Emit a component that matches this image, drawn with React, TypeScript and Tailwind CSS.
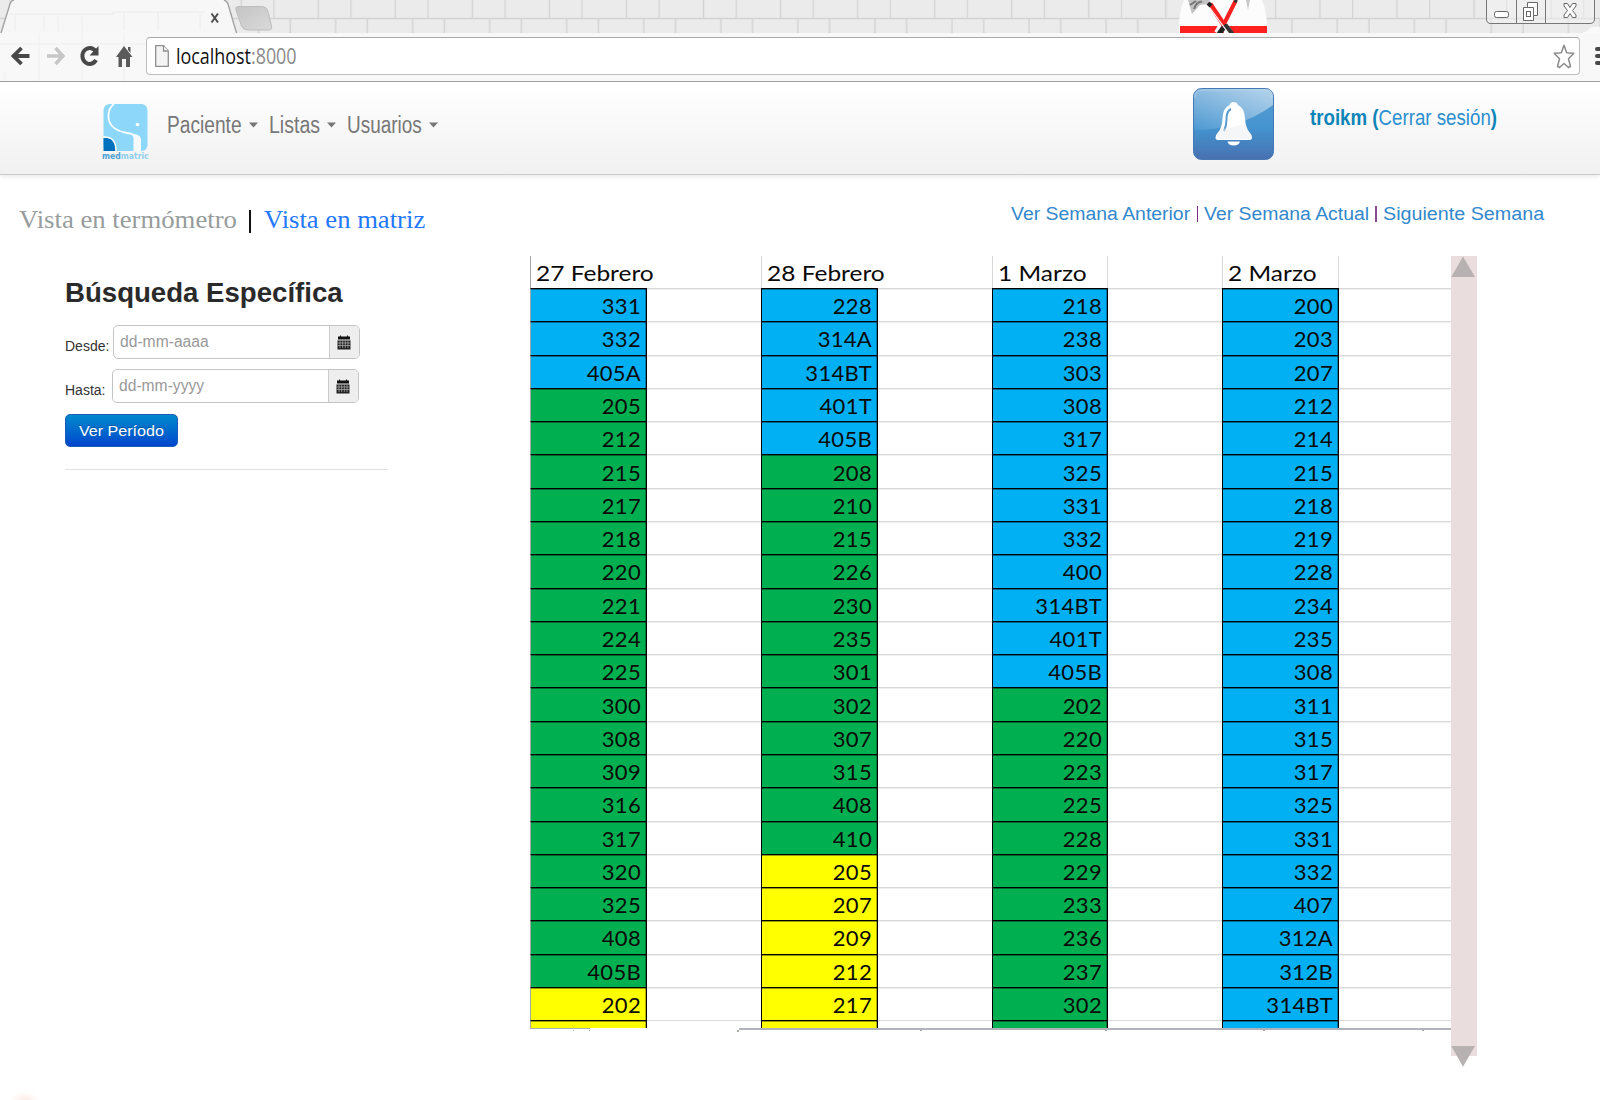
import { useLayoutEffect, useRef, useState } from "react";
import type { ReactNode } from "react";

/* Condenses or widens its text so that it fills the width given by the class. */
function Fit({ className, children }: { className: string; children: ReactNode }) {
  const box = useRef<HTMLSpanElement>(null);
  const text = useRef<HTMLSpanElement>(null);
  const [scale, setScale] = useState(1);
  useLayoutEffect(() => {
    if (box.current && text.current && text.current.offsetWidth > 0) {
      setScale(box.current.getBoundingClientRect().width / text.current.offsetWidth);
    }
  }, []);
  return (
    <span ref={box} className={`block shrink-0 whitespace-nowrap ${className}`}>
      <span ref={text} className="inline-block origin-left" style={{ transform: `scaleX(${scale})` }}>
        {children}
      </span>
    </span>
  );
}

type Run = ["b" | "g" | "y", string];
const days: { label: string; width: string; runs: Run[] }[] = [
  {
    label: "27 Febrero",
    width: "w-[118px]",
    runs: [
      ["b", "331 332 405A"],
      ["g", "205 212 215 217 218 220 221 224 225 300 308 309 316 317 320 325 408 405B"],
      ["y", "202"],
    ],
  },
  {
    label: "28 Febrero",
    width: "w-[118px]",
    runs: [
      ["b", "228 314A 314BT 401T 405B"],
      ["g", "208 210 215 226 230 235 301 302 307 315 408 410"],
      ["y", "205 207 209 212 217"],
    ],
  },
  {
    label: "1 Marzo",
    width: "w-[89px]",
    runs: [
      ["b", "218 238 303 308 317 325 331 332 400 314BT 401T 405B"],
      ["g", "202 220 223 225 228 229 233 236 237 302"],
    ],
  },
  {
    label: "2 Marzo",
    width: "w-[89px]",
    runs: [
      ["b", "200 203 207 212 214 215 218 219 228 234 235 308 311 315 317 325 331 332 407 312A 312B 314BT"],
    ],
  },
];
const fills = { b: "bg-[#00b0f2]", g: "bg-[#00b050]", y: "bg-[#ffff00]" };

function DayColumn({ day, first }: { day: (typeof days)[number]; first: boolean }) {
  const cells = day.runs.flatMap(([c, list]) => list.split(" ").map((v) => ({ c, v })));
  const last = cells[cells.length - 1].c;
  const left = first ? "border-l border-l-[#a6a6a6]" : "border-l border-l-black";
  const right = "border-r border-r-black shadow-[inset_0_1px_0_rgba(0,0,0,0.4),inset_-1px_0_0_rgba(0,0,0,0.3)]";
  return (
    <>
      <div className="flex flex-col">
        <div
          className={`flex h-[32px] items-center border-l pl-[5px] ${first ? "border-[#a6a6a6]" : "border-[#d9d9d9]"} ${
            day.label.includes("Marzo") ? "border-r border-r-[#d9d9d9]" : ""
          }`}
        >
          <Fit className={`${day.width} pt-px text-[22px] leading-[28px]`}>{day.label}</Fit>
        </div>
        {cells.map((cell, i) => (
          <div
            key={i}
            className={`flex h-[33.29px] items-center justify-end border-t border-t-black pr-[5px] pt-[2px] text-[22px] leading-[28px] tracking-[0.3px] ${left} ${right} ${fills[cell.c]}`}
          >
            {cell.v}
          </div>
        ))}
        <div className={`h-[8px] border-t border-t-black ${left} ${right} ${fills[last]}`} />
      </div>
      <div className="flex flex-col">
        <div className="h-[32px]" />
        {cells.map((_, i) => (
          <div key={i} className="h-[33.29px] border-t border-t-[#d9d9d9] shadow-[inset_0_1px_0_#f0f0f0]" />
        ))}
        <div className="h-[8px] border-t border-t-[#d9d9d9]" />
      </div>
    </>
  );
}

function TabStrip() {
  return (
    <svg className="block" width="1600" height="33" viewBox="0 0 1600 33">
      <defs>
        <pattern id="brick" patternUnits="userSpaceOnUse" x="273.3" y="0" width="77.05" height="33">
          <path d="M0 18.5H77.05M.5 0V18M45 0V18M17 19V33M62.3 19V33" stroke="#d3d3d3" strokeWidth="1.4" fill="none" />
        </pattern>
        <linearGradient id="newtab" x1="0" x2="1" y1="0" y2="1">
          <stop offset="0" stopColor="#c4c4c4" />
          <stop offset="1" stopColor="#dadada" />
        </linearGradient>
      </defs>
      <rect width="1600" height="33" fill="#ebebeb" />
      <rect width="1600" height="33" fill="url(#brick)" />
      <path d="M1 33 10 4Q12 0 15 0H223Q227 0 228 4L236.500 33Z" fill="#f7f7f7" />
      <path
        d="M10 14H113V12H205M15 14V31M58 16V31M44 16V31M82 16V31M124 13V30M158 12V30M200 14V30"
        stroke="#ececec"
        strokeWidth="1"
        fill="none"
      />
      <path d="M1 33 10 4Q11.500 0 14 0M224 0Q227 1 228 4L236.500 33" fill="none" stroke="#a3a3a3" strokeWidth="1.4" />
      <path d="m211.500 13.500 6.500 9m0-9-6.500 9" stroke="#4d4d4d" strokeWidth="2" />
      <path
        d="M238 6.500H262Q266 6.500 267.500 10L271.500 26Q272.500 30 268 30H248Q243 30 241.500 26L236 10Q235 6.500 238 6.500Z"
        fill="url(#newtab)"
        stroke="#bdbdbd"
      />
      <path d="M1179 33Q1178 14 1184 0H1262Q1268 14 1267 33Z" fill="#fcfcfc" />
      <rect x="1180" y="26" width="87" height="7" fill="#ff2020" />
      <path d="M1209 4 1229 33" stroke="#fff" strokeWidth="8" />
      <path d="M1236 0 1217 33" stroke="#fff" strokeWidth="6" />
      <path d="M1235.500 1 1223 26" stroke="#f5221f" strokeWidth="4" />
      <path d="M1234.500 0 1237 2" stroke="#333" strokeWidth="3" />
      <path d="M1226 24 1219 34" stroke="#222" strokeWidth="5" />
      <path d="M1210 4 1224 25" stroke="#f5221f" strokeWidth="5" />
      <path d="M1225 25 1232 34" stroke="#333" strokeWidth="5" />
      <path d="M1208.500 6 1229 34" stroke="#fff" strokeWidth="1.200" />
      <path d="M1188 0 1192 14 1200 5 1207 4 1210 0Z" fill="#c2c2c2" />
      <path d="M1190 5 1196 1M1194 9Q1196 2 1202 1.500" stroke="#777" strokeWidth="2" fill="none" />
      <path d="M1208 3 1211 6" stroke="#222" strokeWidth="4" />
      <path d="M1246 0 1248 10 1250 0Z" fill="#c9c9c9" />
      <path d="M1486.500 0V19Q1486.500 23.500 1491 23.500H1590Q1594.500 23.500 1594.500 19V0" fill="#f4f4f4" fillOpacity=".5" stroke="#777" />
      <path d="M1516.500 0V23M1545.500 0V23" stroke="#777" />
      <rect x="1494.500" y="11.500" width="14" height="6" rx="2" fill="#fff" stroke="#666" />
      <path d="M1527.500 2.500H1537.500V15.500H1533.500V20.500H1523.500V7.500H1527.500Z" fill="#fff" stroke="#666" strokeLinejoin="round" />
      <path d="M1527.500 7.500H1533.500V15.500" fill="none" stroke="#666" />
      <rect x="1526.500" y="11.500" width="4" height="5" fill="#fff" stroke="#666" />
      <path
        d="M1564 3.500H1567.500L1570 7.500 1572.500 3.500H1576V6L1572.500 10.500 1576 15V17.500H1572.500L1570 13.500 1567.500 17.500H1564V15L1567.500 10.500 1564 6Z"
        fill="#fff"
        stroke="#666"
      />
      <path d="M1582 33Q1588 31 1590 28Q1594 26 1600 27V33Z" fill="#fafafa" />
    </svg>
  );
}

function NavIcons() {
  return (
    <svg className="block shrink-0" width="146" height="48" viewBox="0 0 146 48" fill="none">
      <path d="M0 11H146M39 0V48M82 0V48M124 0V48M5 40V48" stroke="#efefef" />
      <path d="M29.500 23H14M21.500 15 13.500 23 21.500 31" stroke="#484848" strokeWidth="3.800" />
      <path d="M47 23H62.500M55.500 15 63 23 55.500 31" stroke="#c6c6c6" strokeWidth="3.400" />
      <path d="M95.500 18A7.300 8 0 1 0 96 27" stroke="#484848" strokeWidth="4" />
      <path d="M98.500 13V22.500H89.500Z" fill="#484848" />
      <path d="M124 13 132.500 24H130V34H126V26H122V34H118.500V24H116Z" fill="#5a5a5a" />
      <path d="M128 14H130.500V20L128 17Z" fill="#5a5a5a" />
    </svg>
  );
}

function Logo() {
  return (
    <svg className="block" width="46" height="57" viewBox="0 0 46 57">
      <rect x=".5" y="0" width="44" height="47" rx="6" fill="#8dd8fa" />
      <path d="M.5 34H6Q13 35 13 47H.5Z" fill="#0071bc" />
      <path d="M0 33Q13 32 13 47" fill="none" stroke="#fff" strokeWidth="1.500" />
      <path d="M11 0Q5 4 5.500 14Q7 26 24 29Q32 30 33 34" fill="none" stroke="#fff" strokeWidth="1.800" />
      <path d="M29 30Q37 30 38 35V47H30.500V34Q30 32 29 30Z" fill="#f7fafc" />
      <circle cx="34.500" cy="20.500" r="1.800" fill="#fff" />
    </svg>
  );
}

function Caret({ className }: { className: string }) {
  return (
    <svg className={`shrink-0 ${className}`} width="9" height="6" viewBox="0 0 9 6">
      <path d="M0 .5H9L4.500 5.500Z" fill="#777" />
    </svg>
  );
}

function BellButton() {
  return (
    <svg className="block" width="81" height="72" viewBox="0 0 81 72">
      <defs>
        <linearGradient id="blue" x1="0" x2="0" y1="0" y2="1">
          <stop offset="0" stopColor="#5c9fd3" />
          <stop offset=".55" stopColor="#4494d0" />
          <stop offset="1" stopColor="#4870b0" />
        </linearGradient>
        <linearGradient id="gloss" x1="0" x2="1" y1="1" y2="0">
          <stop offset="0" stopColor="#fff" stopOpacity=".05" />
          <stop offset="1" stopColor="#fff" stopOpacity=".55" />
        </linearGradient>
      </defs>
      <rect x=".5" y=".5" width="80" height="71" rx="8" fill="url(#blue)" stroke="#4579b4" />
      <path d="M1 42Q46 42 80 17V9Q80 1 72 1H9Q1 1 1 9Z" fill="url(#gloss)" />
      <path d="M2 10Q2 2 10 2H71Q79 2 79 10" fill="none" stroke="#b9d8ee" strokeOpacity=".7" />
      <path
        d="M40.500 14Q44 14 45 17Q51.500 20 52 30Q52.500 40 56.500 44.500Q59 47 59 49.500Q59 52 56 52H25Q22.500 52 22.500 49.500Q22.500 47 25 44.500Q29 40 29.500 30Q30 20 36.500 17Q37.500 14 40.500 14Z"
        fill="#fff"
      />
      <path d="M34.500 53.500H47Q46 57.500 40.500 57.500Q35.500 57.500 34.500 53.500Z" fill="#fff" />
      <path d="M38 21Q33.500 23 33.500 31Q33.500 38 31 43" fill="none" stroke="#5a9dd2" strokeWidth="2" />
      <path d="M29 41Q41 40 52.500 35Q54 42 58 46L59 51H23Q23 47 26 45Q28 42 29 41Z" fill="#eceef0" fillOpacity=".5" />
    </svg>
  );
}

function CalendarIcon() {
  return (
    <svg className="-ml-[2px]" width="14" height="15" viewBox="0 0 14 15">
      <path d="M1 1.500H3V.500H4V1.500H10V.500H11V1.500H13V4.500H1Z" fill="#111" />
      <path d="M.5 5.500H13.500V14.500H.5Z" fill="#222" />
      <path d="M.5 8H13.500M.5 10.500H13.500M3 5.500V13M5.700 5.500V13M8.300 5.500V13M11 5.500V13" stroke="#b4b4b4" strokeWidth=".7" />
    </svg>
  );
}

function DateField({ label, labelWidth, gap, hint, hintWidth }: { label: string; labelWidth: string; gap: string; hint: string; hintWidth: string }) {
  return (
    <div className="flex h-[34px] items-start">
      <Fit className={`${labelWidth} pt-[12px] text-[14px] leading-[18px] text-[#333]`}>{label}</Fit>
      <div className={`flex h-[34px] w-[247px] overflow-hidden rounded-[5px] border border-[#c4c4c4] bg-white ${gap}`}>
        <div className="flex flex-1 items-center pl-[6px]">
          <Fit className={`${hintWidth} text-[16px] leading-[20px] text-[#999]`}>{hint}</Fit>
        </div>
        <div className="flex w-[30px] items-center justify-center border-l border-[#ccc] bg-[#eee]">
          <CalendarIcon />
        </div>
      </div>
    </div>
  );
}

export default function App() {
  return (
    <div className="flex h-[1100px] w-[1600px] flex-col overflow-hidden bg-white font-['Liberation_Sans',sans-serif]">
      <TabStrip />
      <div className="flex h-[49px] shrink-0 overflow-hidden border-b border-b-[#a0a0a0] bg-[#f8f8f8]">
        <NavIcons />
        <div className="mt-[4px] flex h-[38px] w-[1434px] shrink-0 items-center rounded-[4px] border border-[#bdbdbd] border-t-[#a8a8a8] bg-white">
          <svg className="ml-[8px]" width="14" height="22" viewBox="0 0 14 22">
            <path d="M.7.7H8.500L13.300 6V21.300H.7Z" fill="#f4f4f4" stroke="#8f8f8f" strokeWidth="1.300" />
            <path d="M8.500.7V6H13.300" fill="#fff" stroke="#8f8f8f" strokeWidth="1.300" />
          </svg>
          <Fit className="ml-[7px] w-[121px] font-['Open_Sans',sans-serif] text-[21px] leading-[28px] text-[#111]">
            localhost<span className="text-[#8a8a8a]">:8000</span>
          </Fit>
          <svg className="ml-auto mr-[4px]" width="22" height="25" viewBox="0 0 22 25">
            <path
              d="M11 1.200 13.700 8.800 20.800 9.200 15.500 14.800 17.500 22.500 15.500 23.500 11 19.500 6.500 23.500 4.500 22.500 6.500 14.800 1.200 9.200 8.300 8.800Z"
              fill="#fff"
              stroke="#8c8c8c"
              strokeWidth="1.500"
              strokeLinejoin="round"
            />
          </svg>
        </div>
        <div className="ml-[15px] mt-[14px] flex shrink-0 flex-col gap-[3px]">
          <div className="h-[4px] w-[8px] rounded-l-full bg-[#484848]" />
          <div className="h-[4px] w-[8px] rounded-l-full bg-[#484848]" />
          <div className="h-[4px] w-[8px] rounded-l-full bg-[#484848]" />
        </div>
      </div>

      <nav className="flex h-[93px] shrink-0 items-start border-b border-b-[#cacaca] bg-linear-to-b from-white to-[#f1f1f1] shadow-[0_2px_4px_rgba(0,0,0,0.08)]">
        <div className="relative ml-[103px] mt-[22px] h-[57px] w-[46px]">
          <Logo />
          <div className="absolute -left-px top-[47px]">
            <Fit className="w-[47px] font-['DejaVu_Sans',sans-serif] text-[9px] font-bold leading-[11px] text-[#8fd0ee]">
              <span className="text-[#4ba0d4]">med</span>matric
            </Fit>
          </div>
        </div>
        <div className="mt-[28px] flex items-center pl-[18px] text-[23px] leading-[30px] text-[#777]">
          <Fit className="w-[75px]">Paciente</Fit>
          <Caret className="ml-[7px] mr-[11px]" />
          <Fit className="w-[51px]">Listas</Fit>
          <Caret className="ml-[7px] mr-[11px]" />
          <Fit className="w-[75px]">Usuarios</Fit>
          <Caret className="ml-[7px]" />
        </div>
        <div className="ml-auto mt-[6px]">
          <BellButton />
        </div>
        <div className="ml-[36px] mr-[103px] mt-[21px] text-[22px] leading-[30px]">
          <Fit className="w-[187px] text-[#2a8fd0]">
            <b className="text-[#0c84b8]">troikm (</b>Cerrar sesión<b className="text-[#0c84b8]">)</b>
          </Fit>
        </div>
      </nav>

      <div className="flex h-[81px] shrink-0 items-start">
        <div className="flex items-center pl-[19px] pt-[30px] font-['Liberation_Serif',serif] text-[24.500px] leading-[30px]">
          <Fit className="w-[218px] text-[#979c9c]">Vista en termómetro</Fit>
          <div className="ml-[12px] mr-[13px] mt-[2px] h-[23px] w-[2px] bg-[#111]" />
          <Fit className="w-[161px] text-[#2478ff]">Vista en matriz</Fit>
        </div>
        <div className="ml-auto mr-[56px] flex items-center pt-[26px] text-[18px] leading-[26px] text-[#3388cc]">
          <Fit className="w-[179px]">Ver Semana Anterior</Fit>
          <div className="ml-[7px] mr-[6px] h-[16px] w-[1.500px] bg-[#7a3080]" />
          <Fit className="w-[165px]">Ver Semana Actual</Fit>
          <div className="mx-[6px] h-[16px] w-[2px] bg-[#8a4a90]" />
          <Fit className="w-[161px]">Siguiente Semana</Fit>
        </div>
      </div>

      <main className="flex">
        <section className="flex w-[530px] shrink-0 flex-col pl-[65px] pt-[21px]">
          <Fit className="w-[278px] text-[27.500px] font-bold leading-[32px] text-[#2a2a2a]">Búsqueda Específica</Fit>
          <div className="mt-[16px] flex flex-col gap-[10px]">
            <DateField label="Desde:" labelWidth="w-[44px]" gap="ml-[4px]" hint="dd-mm-aaaa" hintWidth="w-[89px]" />
            <DateField label="Hasta:" labelWidth="w-[40px]" gap="ml-[7px]" hint="dd-mm-yyyy" hintWidth="w-[85px]" />
          </div>
          <button className="mt-[11px] flex h-[33px] w-[113px] items-center justify-center rounded-[5px] border border-[#1a5cb8] bg-linear-to-b from-[#0088cc] to-[#0044cc] text-white">
            <Fit className="w-[85px] text-left text-[15.500px] leading-[20px] [text-shadow:0_-1px_0_rgba(0,0,0,0.25)]">Ver Período</Fit>
          </button>
          <div className="mt-[22px] h-px w-[323px] bg-[#e2e2e2]" />
        </section>

        <section className="h-[775px] w-[921px] shrink-0">
          <div className="grid h-[772px] grid-cols-[117px_114px_117px_114px_116px_114px_117px_112px] overflow-hidden font-['Lato',sans-serif] text-[#0a0a0a]">
            {days.map((day, i) => (
              <DayColumn key={day.label} day={day} first={i === 0} />
            ))}
          </div>
          <div className="flex">
            <div className="h-px w-[60px] bg-[#b0b0b8]" />
            <div className="ml-[149px] h-[1.500px] flex-1 bg-[#b0b3ba]" />
          </div>
          <div className="flex">
            <div className="ml-[43px] h-px w-px bg-[#aaa]" />
            <div className="ml-[15px] h-px w-px bg-[#aaa]" />
            <div className="ml-[147px] h-[2px] w-[2px] bg-[#aaa]" />
            <div className="ml-[181px] h-px w-[2px] bg-[#aaa]" />
            <div className="ml-[183px] h-px w-[2px] bg-[#aaa]" />
            <div className="ml-[156px] h-px w-[2px] bg-[#aaa]" />
            <div className="ml-[157px] h-px w-[2px] bg-[#aaa]" />
          </div>
        </section>

        <div className="flex h-[800px] w-[26px] flex-col justify-between bg-[#eadddd]">
          <svg width="25" height="21" viewBox="0 0 25 21">
            <path d="M12 .5 24 21H.3Z" fill="#b8b1b1" />
          </svg>
          <svg className="-mb-[11px] shrink-0" width="25" height="21" viewBox="0 0 25 21">
            <path d="M12 20.700 24 0H.3Z" fill="#b8b1b1" />
          </svg>
        </div>
      </main>
      <div className="mt-auto ml-[10px] h-[8px] w-[30px] bg-[radial-gradient(ellipse_at_bottom,#fdece6,#ffffff_70%)]" />
    </div>
  );
}
